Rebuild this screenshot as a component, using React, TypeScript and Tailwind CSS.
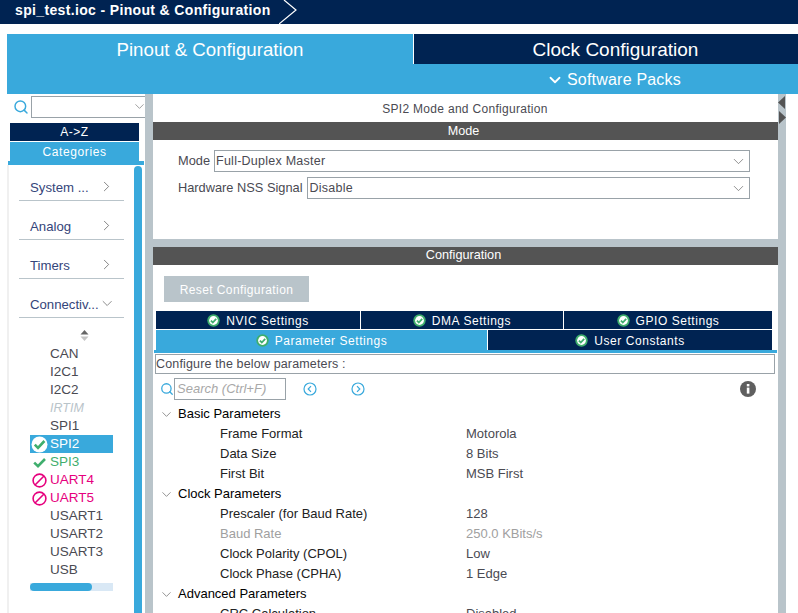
import { ChevronDown, ChevronRight, Search } from "lucide-react"

const FONT = "font-['Liberation_Sans',Arial,sans-serif]"

const CATEGORIES = [
  { label: "System ...", open: false },
  { label: "Analog", open: false },
  { label: "Timers", open: false },
  { label: "Connectiv...", open: true },
]

type PeripheralState = "none" | "disabled" | "selected" | "ok" | "blocked"

const PERIPHERALS: { name: string; state: PeripheralState }[] = [
  { name: "CAN", state: "none" },
  { name: "I2C1", state: "none" },
  { name: "I2C2", state: "none" },
  { name: "IRTIM", state: "disabled" },
  { name: "SPI1", state: "none" },
  { name: "SPI2", state: "selected" },
  { name: "SPI3", state: "ok" },
  { name: "UART4", state: "blocked" },
  { name: "UART5", state: "blocked" },
  { name: "USART1", state: "none" },
  { name: "USART2", state: "none" },
  { name: "USART3", state: "none" },
  { name: "USB", state: "none" },
]

const PARAMS: { group: string; rows: { name: string; value: string; muted?: boolean }[] }[] = [
  {
    group: "Basic Parameters",
    rows: [
      { name: "Frame Format", value: "Motorola" },
      { name: "Data Size", value: "8 Bits" },
      { name: "First Bit", value: "MSB First" },
    ],
  },
  {
    group: "Clock Parameters",
    rows: [
      { name: "Prescaler (for Baud Rate)", value: "128" },
      { name: "Baud Rate", value: "250.0 KBits/s", muted: true },
      { name: "Clock Polarity (CPOL)", value: "Low" },
      { name: "Clock Phase (CPHA)", value: "1 Edge" },
    ],
  },
  {
    group: "Advanced Parameters",
    rows: [{ name: "CRC Calculation", value: "Disabled" }],
  },
]

function OkBadge() {
  return (
    <svg width="13" height="13" viewBox="0 0 13 13" className="shrink-0">
      <circle cx="6.5" cy="6.5" r="6.2" fill="#3fae6d" />
      <circle cx="6.5" cy="6.5" r="4.4" fill="#ffffff" />
      <path d="M3.9 6.6 L5.8 8.5 L9.2 4.8" fill="none" stroke="#3fae6d" strokeWidth="1.8" />
    </svg>
  )
}

function PeripheralIcon({ state }: { state: PeripheralState }) {
  if (state === "selected") {
    return (
      <svg width="17" height="17" viewBox="0 0 17 17" className="shrink-0">
        <circle cx="8.5" cy="8.5" r="8" fill="#ffffff" />
        <path d="M3.8 8.6 L7 11.8 L13.4 5" fill="none" stroke="#3fae6d" strokeWidth="2.6" />
      </svg>
    )
  }
  if (state === "ok") {
    return (
      <svg width="17" height="17" viewBox="0 0 17 17" className="shrink-0">
        <path d="M3.2 8.6 L7 12.2 L14 5" fill="none" stroke="#3fae6d" strokeWidth="2.6" />
      </svg>
    )
  }
  if (state === "blocked") {
    return (
      <svg width="17" height="17" viewBox="0 0 17 17" className="shrink-0">
        <circle cx="8.5" cy="8.5" r="6.4" fill="none" stroke="#e6007e" strokeWidth="1.6" />
        <path d="M4 13 L13 4" stroke="#e6007e" strokeWidth="1.6" />
      </svg>
    )
  }
  return <span className="w-[17px] shrink-0" />
}

function Select({ value, width }: { value: string; width: string }) {
  return (
    <div className={`flex h-[22px] items-center justify-between border border-[#99a2a8] pl-[1px] pr-[2px] ${width}`}>
      <span className="pt-[1px] text-[12.5px] tracking-[0.25px] text-[#4a4a52]">{value}</span>
      <ChevronDown size={17} strokeWidth={1} className="text-[#666]" />
    </div>
  )
}

function SubTab({ label, active, grow }: { label: string; active?: boolean; grow: string }) {
  return (
    <div
      className={`flex items-center justify-center gap-[6px] pt-[1px] text-[12px] tracking-[0.55px] text-white ${grow} ${
        active ? "bg-[#39a9dc]" : "bg-[#002352]"
      }`}
    >
      <OkBadge />
      <span>{label}</span>
    </div>
  )
}

function Sidebar() {
  return (
    <aside className="flex w-[138px] shrink-0 flex-col">
      <div className="flex h-[24px] items-center pt-[1px]">
        <Search size={16} strokeWidth={2.2} className="ml-[6px] mr-[2px] text-[#39a9dc]" />
        <div className="flex h-[22px] flex-1 items-center justify-end border-y border-l border-[#99a2a8]">
          <ChevronDown size={15} strokeWidth={1} className="-mr-[2px] text-[#666]" />
        </div>
      </div>
      <div className="ml-[3px] mt-[5px] w-[129px]">
        <div className="flex h-[18px] items-center justify-center bg-[#002352] text-[12px] tracking-[0.5px] text-white">A-&gt;Z</div>
        <div className="mt-[1px] flex h-[19px] items-center justify-center bg-[#39a9dc] text-[12px] tracking-[0.6px] text-white">Categories</div>
      </div>
      <div className="ml-[1px] h-[4px] w-[136px] bg-[#39a9dc]" />
      <div className="flex flex-1 overflow-hidden border-l-2 border-[#f0f0f0]">
        <div className="w-[125px] shrink-0">
          <div className="ml-[10px] -mt-[3px] w-[105px]">
            {CATEGORIES.map((c) => (
              <div key={c.label} className="mt-[12px] flex h-[27px] items-center justify-between border-b border-[#b9c4ca] pl-[11px] pt-[2px]">
                <span className="whitespace-nowrap text-[13.2px] text-[#34457a]">{c.label}</span>
                {c.open ? (
                  <ChevronDown size={17} strokeWidth={1} className="mr-[9px] -mt-[4px] text-[#555]" />
                ) : (
                  <ChevronRight size={17} strokeWidth={1} className="mr-[9px] -mt-[4px] text-[#555]" />
                )}
              </div>
            ))}
          </div>
          <div className="mt-[12px] flex justify-center pl-[26px]">
            <svg width="9" height="11" viewBox="0 0 9 11">
              <path d="M4.5 0 L8.5 4.5 L0.5 4.5 Z" fill="#666" />
              <path d="M4.5 11 L8.5 6.5 L0.5 6.5 Z" fill="#c4c4c4" />
            </svg>
          </div>
          <div className="ml-[21px] mt-[4px] w-[83px]">
            {PERIPHERALS.map((p) => (
              <div key={p.name} className={`flex h-[18px] items-center gap-[2px] pl-[1px] text-[13.5px] ${p.state === "selected" ? "bg-[#39a9dc]" : ""}`}>
                <span className="flex w-[17px] shrink-0 items-center justify-center">
                  <PeripheralIcon state={p.state} />
                </span>
                <span
                  className={
                    p.state === "selected"
                      ? "text-white"
                      : p.state === "ok"
                        ? "text-[#3fae6d]"
                        : p.state === "blocked"
                          ? "text-[#e6007e]"
                          : p.state === "disabled"
                            ? "text-[12.5px] italic text-[#b9c4ca]"
                            : "text-[#4a4a52]"
                  }
                >
                  {p.name}
                </span>
              </div>
            ))}
            <div className="mt-[4px] h-[8px] bg-[#d9e8f5]">
              <div className="h-[8px] w-[62px] rounded-full bg-[#39a9dc]" />
            </div>
          </div>
        </div>
        <div className="mt-[1px] w-[8px] rounded-t-full bg-[#39a9dc]" />
      </div>
    </aside>
  )
}

function ParameterTree() {
  return (
    <div className="mt-[4px] pl-[6px] text-[13px]">
      {PARAMS.map((g) => (
        <div key={g.group}>
          <div className="flex h-[20px] items-center text-black">
            <ChevronDown size={15} strokeWidth={1} className="text-[#555]" />
            <span className="ml-[4px]">{g.group}</span>
          </div>
          {g.rows.map((r) => (
            <div key={r.name} className="flex h-[20px] items-center">
              <span className={`ml-[61px] w-[246px] ${r.muted ? "text-[#a0a0a0]" : "text-[#222]"}`}>{r.name}</span>
              <span className={r.muted ? "text-[#a0a0a0]" : "text-[#4a4a52]"}>{r.value}</span>
            </div>
          ))}
        </div>
      ))}
    </div>
  )
}

function MainPanel() {
  return (
    <main className="flex w-[625px] shrink-0 flex-col bg-[#b9c4ca]">
      <section className="h-[145px] shrink-0 bg-white">
        <div className="flex h-[28px] items-center justify-center pr-[1px] pt-[1px] text-[12px] tracking-[0.3px] text-[#4a4a52]">SPI2 Mode and Configuration</div>
        <div className="flex h-[18px] items-center justify-center bg-[#545454] pr-[4px] text-[12.6px] text-white">Mode</div>
        <div className="mt-[10px] flex items-center pl-[25px]">
          <span className="mr-[4px] text-[12.8px] text-[#4a4a52]">Mode</span>
          <Select value="Full-Duplex Master" width="w-[536px]" />
        </div>
        <div className="mt-[5px] flex items-center pl-[25px]">
          <span className="mr-[5px] text-[12.8px] text-[#4a4a52]">Hardware NSS Signal</span>
          <Select value="Disable" width="w-[443px]" />
        </div>
      </section>
      <section className="mt-[8px] flex-1 overflow-hidden bg-white">
        <div className="flex h-[18px] items-center justify-center bg-[#545454] pr-[4px] text-[12.7px] text-white">Configuration</div>
        <button className="ml-[11px] mt-[11px] flex h-[26px] w-[145px] items-center justify-center bg-[#b9c4ca] pt-[1px] text-[12px] tracking-[0.4px] text-white">
          Reset Configuration
        </button>
        <div className="ml-[3px] mt-[9px] flex h-[18px] w-[616px] gap-[1px]">
          <SubTab label="NVIC Settings" grow="w-[204px]" />
          <SubTab label="DMA Settings" grow="w-[202px]" />
          <SubTab label="GPIO Settings" grow="flex-1" />
        </div>
        <div className="ml-[3px] mt-[1px] flex h-[20px] w-[616px] gap-[1px]">
          <SubTab label="Parameter Settings" active grow="w-[331px]" />
          <SubTab label="User Constants" grow="flex-1" />
        </div>
        <div className="ml-[1px] h-[3px] w-[623px] bg-[#39a9dc]" />
        <div className="ml-[2px] mt-[1px] flex h-[20px] w-[620px] items-center border border-[#99a2a8] pt-[1px] text-[12.5px] tracking-[0.15px] text-[#4a4a52]">
          Configure the below parameters :
        </div>
        <div className="mt-[4px] flex h-[22px] items-center">
          <Search size={14} strokeWidth={2.2} className="ml-[7px] text-[#39a9dc]" />
          <div className="flex h-[22px] w-[112px] items-center border border-[#99a2a8] pl-[2px] text-[13px] italic text-[#a8a8a8]">
            Search (Ctrl+F)
          </div>
          <svg width="14" height="14" viewBox="0 0 14 14" className="ml-[17px]">
            <circle cx="7" cy="7" r="6" fill="none" stroke="#39a9dc" strokeWidth="1.2" />
            <path d="M8 4.2 L5.2 7 L8 9.8" fill="none" stroke="#39a9dc" strokeWidth="1.2" />
          </svg>
          <svg width="14" height="14" viewBox="0 0 14 14" className="ml-[34px]">
            <circle cx="7" cy="7" r="6" fill="none" stroke="#39a9dc" strokeWidth="1.2" />
            <path d="M6 4.2 L8.8 7 L6 9.8" fill="none" stroke="#39a9dc" strokeWidth="1.2" />
          </svg>
          <svg width="16" height="16" viewBox="0 0 16 16" className="ml-[375px]">
            <circle cx="8" cy="8" r="8" fill="#5f5f5f" />
            <rect x="6.8" y="6.6" width="2.6" height="6" fill="#ffffff" />
            <rect x="6.8" y="3" width="2.6" height="2.4" fill="#ffffff" />
          </svg>
        </div>
        <ParameterTree />
      </section>
    </main>
  )
}

export default function App() {
  return (
    <div className={`h-[613px] w-[798px] overflow-hidden bg-white ${FONT}`}>
      <header className="flex h-[24px] items-center bg-[#002352]">
        <span className="ml-[15px] pb-[3px] text-[14px] font-bold tracking-[0.35px] text-white">spi_test.ioc - Pinout &amp; Configuration</span>
        <svg width="18" height="24" viewBox="0 0 18 24" className="ml-[8px]">
          <path d="M5 0 L17 10 L0 24" fill="none" stroke="#ffffff" strokeWidth="1.2" />
        </svg>
      </header>
      <div className="mt-[10px] ml-[7px]">
        <div className="flex h-[30px]">
          <div className="flex w-[406px] items-center justify-center bg-[#39a9dc] pt-[2px] text-[18.7px] text-white">Pinout &amp; Configuration</div>
          <div className="ml-[1px] flex flex-1 items-center justify-center bg-[#002352] pl-[19px] pt-[2px] text-[19px] text-white">Clock Configuration</div>
        </div>
        <div className="flex h-[30px] items-center bg-[#39a9dc] pl-[539px] pt-[2px] text-[16px] tracking-[0.2px] text-white">
          <ChevronDown size={18} strokeWidth={2.4} className="mr-[3px]" />
          Software Packs
        </div>
        <div className="flex h-[519px]">
          <Sidebar />
          <div className="w-[8px] shrink-0 bg-[#b9c4ca]" />
          <MainPanel />
          <div className="flex w-[8px] shrink-0 flex-col items-center gap-[2px] bg-[#b9c4ca] pt-[2px]">
            <svg width="8" height="13" viewBox="0 0 8 13">
              <path d="M7 0 L0 6.5 L7 13 Z" fill="#545454" />
            </svg>
            <svg width="8" height="13" viewBox="0 0 8 13">
              <path d="M1 0 L8 6.5 L1 13 Z" fill="#545454" />
            </svg>
          </div>
        </div>
      </div>
    </div>
  )
}
